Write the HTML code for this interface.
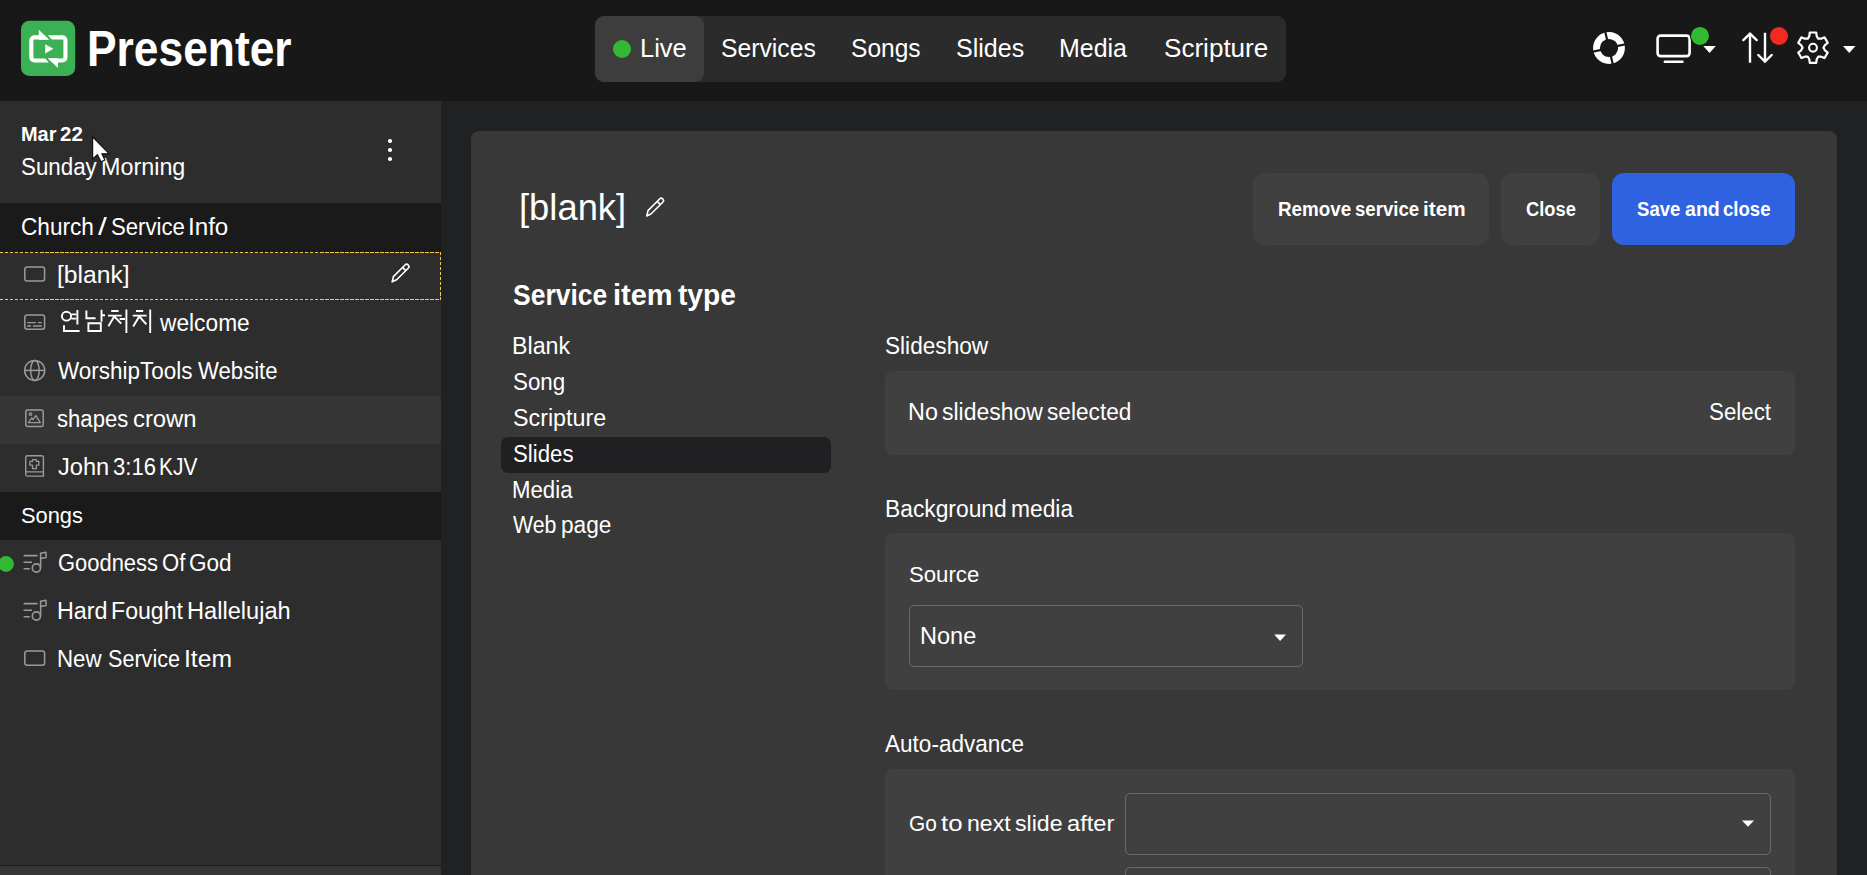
<!DOCTYPE html>
<html><head><meta charset="utf-8"><style>
html,body{margin:0;padding:0}
body{width:1867px;height:875px;overflow:hidden;position:relative;background:#202123;font-family:"Liberation Sans",sans-serif}
.b{position:absolute}
.t{position:absolute;white-space:pre;transform-origin:0 0}
</style></head><body>
<div class="b" style="left:0px;top:0px;width:1867px;height:101px;background:#181818;border-radius:0px;"></div>
<div class="b" style="left:0px;top:101px;width:441px;height:774px;background:#2d2d2d;border-radius:0px;"></div>
<div class="b" style="left:0px;top:203px;width:441px;height:49px;background:#1a1a1a;border-radius:0px;"></div>
<div class="b" style="left:0px;top:396px;width:441px;height:48px;background:#353535;border-radius:0px;"></div>
<div class="b" style="left:0px;top:492px;width:441px;height:48px;background:#1a1a1a;border-radius:0px;"></div>
<div class="b" style="left:0px;top:865px;width:441px;height:1px;background:#1e1e1e;border-radius:0px;"></div>
<div class="b" style="left:0px;top:866px;width:441px;height:9px;background:#363636;border-radius:0px;"></div>
<div class="b" style="left:471px;top:131px;width:1366px;height:800px;background:#383838;border-radius:8px;"></div>
<svg class="b" style="left:10px;top:10px" width="80" height="80" viewBox="0 0 80 80">
<rect x="11" y="10.8" width="54.2" height="55.2" rx="8.5" fill="#3cb054"/>
<rect x="21.35" y="27.35" width="34.1" height="23.2" rx="3" fill="none" stroke="#fff" stroke-width="4.1"/>
<path d="M33.69 24.4 L37.25 24.4 L42.27 30.3 L39.67 30.3 Z" fill="#3cb054"/>
<path d="M43.11 53.4 L39.55 53.4 L34.53 47.5 L37.13 47.5 Z" fill="#3cb054"/>
<path d="M28.8 19.8 L38.98 29.63 L28.8 29.63 Z" fill="#fff"/>
<path d="M48.0 58.0 L37.82 48.17 L48.0 48.17 Z" fill="#fff"/>
<path d="M35.2 34.3 L35.2 43.4 L43.4 38.85 Z" fill="#fff"/>
</svg>
<div class="t" style="left:87.01px;top:23.65px;font-size:50.62px;line-height:50.62px;font-weight:700;color:#fff;transform:scaleX(0.8761);">Presenter</div>
<div class="b" style="left:595px;top:16px;width:691px;height:66px;background:#2b2b2b;border-radius:9px;"></div>
<div class="b" style="left:595px;top:16px;width:109px;height:66px;background:#3d3d3d;border-radius:9px;"></div>
<div class="b" style="left:613px;top:40px;width:18px;height:18px;border-radius:50%;background:#33b833"></div>
<div class="t" style="left:639.90px;top:35.07px;font-size:26.62px;line-height:26.62px;font-weight:400;color:#fff;transform:scaleX(0.9571);">Live</div>
<div class="t" style="left:721.49px;top:35.07px;font-size:26.62px;line-height:26.62px;font-weight:400;color:#fff;transform:scaleX(0.9285);">Services</div>
<div class="t" style="left:851.29px;top:35.07px;font-size:26.62px;line-height:26.62px;font-weight:400;color:#fff;transform:scaleX(0.9232);">Songs</div>
<div class="t" style="left:956.17px;top:35.07px;font-size:26.62px;line-height:26.62px;font-weight:400;color:#fff;transform:scaleX(0.9412);">Slides</div>
<div class="t" style="left:1059.34px;top:35.07px;font-size:26.62px;line-height:26.62px;font-weight:400;color:#fff;transform:scaleX(0.9383);">Media</div>
<div class="t" style="left:1164.03px;top:35.07px;font-size:26.62px;line-height:26.62px;font-weight:400;color:#fff;transform:scaleX(0.9794);">Scripture</div>
<svg class="b" style="left:1560px;top:0px" width="307" height="101" viewBox="1560 0 307 101">
<circle cx="1609" cy="48" r="12.5" fill="none" stroke="#fff" stroke-width="6.8"/>
<line x1="1607.43" y1="41.18" x2="1604.95" y2="30.46" stroke="#181818" stroke-width="2.2"/><line x1="1615.82" y1="46.43" x2="1626.54" y2="43.95" stroke="#181818" stroke-width="2.2"/><line x1="1610.57" y1="54.82" x2="1613.05" y2="65.54" stroke="#181818" stroke-width="2.2"/><line x1="1602.18" y1="49.57" x2="1591.46" y2="52.05" stroke="#181818" stroke-width="2.2"/>
<rect x="1657.6" y="35.6" width="32" height="20.5" rx="3" fill="none" stroke="#fff" stroke-width="2.6"/>
<rect x="1663.6" y="60.6" width="20" height="2.5" rx="1" fill="#fff"/>
<circle cx="1700" cy="35.9" r="10" fill="#181818"/>
<circle cx="1700" cy="35.9" r="9" fill="#33b833"/>
<path d="M1703.3 46.1 L1715.8 46.1 L1709.55 53 Z" fill="#fff"/>
<path d="M1750 62.7 V34.5" fill="none" stroke="#fff" stroke-width="2.4"/><path d="M1743.3 40.1 L1750 33.6 L1756.7 40.1" fill="none" stroke="#fff" stroke-width="2.4" stroke-linecap="round" stroke-linejoin="miter"/>
<path d="M1765 32.8 V61" fill="none" stroke="#fff" stroke-width="2.4"/><path d="M1758.3 55 L1765 61.5 L1771.7 55" fill="none" stroke="#fff" stroke-width="2.4" stroke-linecap="round" stroke-linejoin="miter"/>
<circle cx="1779" cy="36" r="9" fill="#f22b22"/>
<path d="M1809.30 36.10 L1809.80 32.50 L1816.20 32.50 L1816.70 36.10 L1818.20 38.69 L1821.20 38.70 L1824.56 37.33 L1827.76 42.87 L1824.90 45.10 L1823.40 47.70 L1824.90 50.30 L1827.76 52.53 L1824.56 58.07 L1821.20 56.70 L1818.20 56.71 L1816.70 59.30 L1816.20 62.90 L1809.80 62.90 L1809.30 59.30 L1807.80 56.71 L1804.80 56.70 L1801.44 58.07 L1798.24 52.53 L1801.10 50.30 L1802.60 47.70 L1801.10 45.10 L1798.24 42.87 L1801.44 37.33 L1804.80 38.70 L1807.80 38.69 Z" fill="none" stroke="#fff" stroke-width="2.2" stroke-linejoin="round"/>
<circle cx="1813" cy="47.7" r="3.9" fill="none" stroke="#fff" stroke-width="2.1"/>
<path d="M1843 46 L1855.5 46 L1849.25 53 Z" fill="#fff"/>
</svg>
<div class="t" style="left:20.65px;top:124.29px;font-size:20.22px;line-height:20.22px;font-weight:700;color:#fff;transform:scaleX(0.9878);">Mar</div>
<div class="t" style="left:60.28px;top:124.29px;font-size:20.22px;line-height:20.22px;font-weight:700;color:#fff;transform:scaleX(1.0154);">22</div>
<div class="t" style="left:20.74px;top:154.51px;font-size:23.85px;line-height:23.85px;font-weight:400;color:#fff;transform:scaleX(0.9368);">Sunday</div>
<div class="t" style="left:101.27px;top:154.51px;font-size:23.85px;line-height:23.85px;font-weight:400;color:#fff;transform:scaleX(0.9793);">Morning</div>
<div class="b" style="left:388px;top:139.2px;width:3.6px;height:3.6px;border-radius:50%;background:#fff"></div>
<div class="b" style="left:388px;top:148.2px;width:3.6px;height:3.6px;border-radius:50%;background:#fff"></div>
<div class="b" style="left:388px;top:157.2px;width:3.6px;height:3.6px;border-radius:50%;background:#fff"></div>
<svg class="b" style="left:88px;top:132.8px" width="30" height="34" viewBox="0 0 30 34">
<path d="M4.6 3.8 L4.6 26 L9.4 21.8 L13 28.8 L16.9 27 L13.9 20.8 L21 20.6 Z" fill="#fff" stroke="#111" stroke-width="1.2" stroke-linejoin="miter"/>
</svg>
<div class="t" style="left:20.67px;top:215.16px;font-size:24.15px;line-height:24.15px;font-weight:400;color:#fff;transform:scaleX(0.9375);">Church</div>
<div class="t" style="left:97.50px;top:215.16px;font-size:24.15px;line-height:24.15px;font-weight:400;color:#fff;transform:scaleX(1.3134);">/</div>
<div class="t" style="left:110.60px;top:215.16px;font-size:24.15px;line-height:24.15px;font-weight:400;color:#fff;transform:scaleX(0.9177);">Service</div>
<div class="t" style="left:188.36px;top:215.16px;font-size:24.15px;line-height:24.15px;font-weight:400;color:#fff;transform:scaleX(1.0010);">Info</div>
<div class="b" style="left:0;top:252px;width:441px;height:1px;background:repeating-linear-gradient(90deg,#f5c84c 0 3.5px,transparent 3.5px 5px)"></div>
<div class="b" style="left:0;top:299px;width:441px;height:1px;background:repeating-linear-gradient(90deg,#f5c84c 0 3.5px,transparent 3.5px 5px)"></div>
<div class="b" style="left:440px;top:252px;width:1px;height:48px;background:repeating-linear-gradient(180deg,#f5c84c 0 3.5px,transparent 3.5px 5px)"></div>
<svg class="b" style="left:0;top:0" width="441" height="875" viewBox="0 0 441 875">
<g fill="none" stroke="#9a9a9a" stroke-width="1.5">
<rect x="24.8" y="267" width="19.8" height="13.9" rx="2.5"/>
<rect x="24.8" y="315" width="19.8" height="14.2" rx="2.5"/>
<path d="M27.1 322.6 H35.8 M37.8 322.6 H41.9 M27.1 326 H31 M33 326 H41.9" stroke-width="1.4"/>
<circle cx="34.7" cy="370.4" r="10"/>
<ellipse cx="34.9" cy="370.4" rx="4.3" ry="10"/>
<path d="M24.7 370.4 H44.7"/>
<rect x="25.8" y="409.9" width="17.4" height="16.6" rx="2"/>
<circle cx="30.5" cy="414.1" r="1.3" stroke-width="1.2"/>
<path d="M28.4 422.6 L31.6 418 L32.9 419.6 L35.8 415.6 L40.3 422.6 Z" stroke-width="1.3" stroke-linejoin="round"/>
<path d="M25.7 474.4 V457.4 Q25.7 455.7 27.4 455.7 H41.7 Q43.4 455.7 43.4 457.4 V476.1 H27.4 Q25.7 476.1 25.7 474.4 M25.7 471.9 H43.4" stroke-width="1.4"/>
<path d="M32.55 459.55 H36.35 V461.45 H38.85 V465.15 H36.35 V468.65 H32.55 V465.15 H29.85 V461.45 H32.55 Z" stroke-width="1.3" stroke-linejoin="round"/>
<path d="M23.6 555.6 H37.6 M23.6 562.2 H32 M23.6 568.8 H29.8" stroke-width="1.6"/>
<path d="M40.6 568 V553.3 L46 552.3 V557.6 L40.6 558.6" stroke-width="1.5" stroke-linejoin="round"/>
<circle cx="36.4" cy="568" r="4.1" stroke-width="1.6"/>
<path d="M23.6 603.6 H37.6 M23.6 610.2 H32 M23.6 616.8 H29.8" stroke-width="1.6"/>
<path d="M40.6 616 V601.3 L46 600.3 V605.6 L40.6 606.6" stroke-width="1.5" stroke-linejoin="round"/>
<circle cx="36.4" cy="616" r="4.1" stroke-width="1.6"/>
<rect x="24.8" y="651" width="19.8" height="14.2" rx="2.5"/>
</g>
<path d="M392.2 281.8 L393.4 276.6 L405 265 Q406.6 263.4 408.2 265 Q409.8 266.6 408.2 268.2 L396.6 279.8 Z M402.6 267.4 L405.8 270.6" fill="none" stroke="#fff" stroke-width="1.6" stroke-linejoin="round"/>
<circle cx="6" cy="564" r="7.9" fill="#33b833"/>
</svg>
<div class="t" style="left:57.38px;top:263.78px;font-size:23.30px;line-height:23.30px;font-weight:400;color:#fff;transform:scaleX(1.0573);">[blank]</div>
<svg class="b" style="left:58px;top:306px" width="100" height="32" viewBox="58 306 100 32">
<g fill="none" stroke="#fff" stroke-width="1.9">
<ellipse cx="66.5" cy="316.2" rx="4.6" ry="4.4"/>
<path d="M71.3 314.4 H76.2 M71.3 318.6 H76.2 M77.4 310 V324.6 M64 325.2 V331 H79.6"/>
<path d="M86.4 310.6 V318.2 H95.6 M101.5 309.8 V321.8 M101.5 315.2 H105 M88.4 323.2 H100.8 V331 H88.4 Z"/>
<path d="M111.2 311 H118.6 M108 315.6 H121.6 M114.8 315.6 L108.4 326.2 M114.8 317 L121.2 323.6 M119.6 319 H125 M126.4 309.6 V333"/>
<path d="M136 311 H143.2 M132.8 315.6 H146.6 M139.8 315.6 L133.2 326.6 M139.8 317 L146.4 324.4 M150.2 309.6 V333"/>
</g></svg>
<div class="t" style="left:159.76px;top:311.78px;font-size:23.30px;line-height:23.30px;font-weight:400;color:#fff;transform:scaleX(0.9760);">welcome</div>
<div class="t" style="left:58.29px;top:359.78px;font-size:23.30px;line-height:23.30px;font-weight:400;color:#fff;transform:scaleX(0.9645);">WorshipTools</div>
<div class="t" style="left:197.69px;top:359.78px;font-size:23.30px;line-height:23.30px;font-weight:400;color:#fff;transform:scaleX(0.9504);">Website</div>
<div class="t" style="left:57.49px;top:407.78px;font-size:23.30px;line-height:23.30px;font-weight:400;color:#fff;transform:scaleX(0.9486);">shapes</div>
<div class="t" style="left:132.79px;top:407.78px;font-size:23.30px;line-height:23.30px;font-weight:400;color:#fff;transform:scaleX(1.0217);">crown</div>
<div class="t" style="left:58.05px;top:455.78px;font-size:23.30px;line-height:23.30px;font-weight:400;color:#fff;transform:scaleX(1.0144);">John</div>
<div class="t" style="left:112.77px;top:455.78px;font-size:23.30px;line-height:23.30px;font-weight:400;color:#fff;transform:scaleX(0.9481);">3:16</div>
<div class="t" style="left:159.47px;top:455.78px;font-size:23.30px;line-height:23.30px;font-weight:400;color:#fff;transform:scaleX(0.8989);">KJV</div>
<div class="t" style="left:20.72px;top:504.74px;font-size:22.40px;line-height:22.40px;font-weight:400;color:#fff;transform:scaleX(0.9755);">Songs</div>
<div class="t" style="left:57.80px;top:551.78px;font-size:23.30px;line-height:23.30px;font-weight:400;color:#fff;transform:scaleX(0.9414);">Goodness</div>
<div class="t" style="left:161.85px;top:551.78px;font-size:23.30px;line-height:23.30px;font-weight:400;color:#fff;transform:scaleX(0.9476);">Of</div>
<div class="t" style="left:189.27px;top:551.78px;font-size:23.30px;line-height:23.30px;font-weight:400;color:#fff;transform:scaleX(0.9682);">God</div>
<div class="t" style="left:57.27px;top:599.78px;font-size:23.30px;line-height:23.30px;font-weight:400;color:#fff;transform:scaleX(1.0016);">Hard</div>
<div class="t" style="left:111.19px;top:599.78px;font-size:23.30px;line-height:23.30px;font-weight:400;color:#fff;transform:scaleX(0.9926);">Fought</div>
<div class="t" style="left:186.95px;top:599.78px;font-size:23.30px;line-height:23.30px;font-weight:400;color:#fff;transform:scaleX(1.0141);">Hallelujah</div>
<div class="t" style="left:57.36px;top:647.78px;font-size:23.30px;line-height:23.30px;font-weight:400;color:#fff;transform:scaleX(0.9567);">New</div>
<div class="t" style="left:108.13px;top:647.78px;font-size:23.30px;line-height:23.30px;font-weight:400;color:#fff;transform:scaleX(0.9271);">Service</div>
<div class="t" style="left:184.12px;top:647.78px;font-size:23.30px;line-height:23.30px;font-weight:400;color:#fff;transform:scaleX(1.0589);">Item</div>
<div class="t" style="left:518.85px;top:190.20px;font-size:36.50px;line-height:36.50px;font-weight:400;color:#fff;transform:scaleX(0.9963);">[blank]</div>
<svg class="b" style="left:640px;top:192px" width="30" height="30" viewBox="640 192 30 30">
<path d="M646.8 216 L648 210.6 L659.6 199 Q661.2 197.4 662.8 199 Q664.4 200.6 662.8 202.2 L651.2 213.8 Z M657.2 201.4 L660.4 204.6" fill="none" stroke="#fff" stroke-width="1.6" stroke-linejoin="round"/>
</svg>
<div class="b" style="left:1253px;top:173px;width:236px;height:72px;background:#404040;border-radius:12px;"></div>
<div class="b" style="left:1501px;top:173px;width:99px;height:72px;background:#404040;border-radius:12px;"></div>
<div class="b" style="left:1612px;top:173px;width:183px;height:72px;background:#2f62e0;border-radius:12px;"></div>
<div class="t" style="left:1278.33px;top:199.02px;font-size:20.65px;line-height:20.65px;font-weight:700;color:#fff;transform:scaleX(0.9121);">Remove</div>
<div class="t" style="left:1355.35px;top:199.02px;font-size:20.65px;line-height:20.65px;font-weight:700;color:#fff;transform:scaleX(0.9024);">service</div>
<div class="t" style="left:1422.65px;top:199.02px;font-size:20.65px;line-height:20.65px;font-weight:700;color:#fff;transform:scaleX(1.0035);">item</div>
<div class="t" style="left:1525.87px;top:199.02px;font-size:20.65px;line-height:20.65px;font-weight:700;color:#fff;transform:scaleX(0.8879);">Close</div>
<div class="t" style="left:1637.44px;top:199.02px;font-size:20.65px;line-height:20.65px;font-weight:700;color:#fff;transform:scaleX(0.8991);">Save</div>
<div class="t" style="left:1684.81px;top:199.02px;font-size:20.65px;line-height:20.65px;font-weight:700;color:#fff;transform:scaleX(0.9496);">and</div>
<div class="t" style="left:1722.86px;top:199.02px;font-size:20.65px;line-height:20.65px;font-weight:700;color:#fff;transform:scaleX(0.9010);">close</div>
<div class="t" style="left:513.21px;top:280.74px;font-size:28.65px;line-height:28.65px;font-weight:700;color:#fff;transform:scaleX(0.9246);">Service</div>
<div class="t" style="left:612.87px;top:280.74px;font-size:28.65px;line-height:28.65px;font-weight:700;color:#fff;transform:scaleX(1.0134);">item</div>
<div class="t" style="left:678.15px;top:280.74px;font-size:28.65px;line-height:28.65px;font-weight:700;color:#fff;transform:scaleX(0.9827);">type</div>
<div class="b" style="left:501px;top:437px;width:330px;height:36px;background:#202022;border-radius:7px;"></div>
<div class="t" style="left:512.28px;top:334.80px;font-size:23.27px;line-height:23.27px;font-weight:400;color:#fff;transform:scaleX(0.9979);">Blank</div>
<div class="t" style="left:513.19px;top:370.80px;font-size:23.27px;line-height:23.27px;font-weight:400;color:#fff;transform:scaleX(0.9606);">Song</div>
<div class="t" style="left:513.15px;top:406.80px;font-size:23.27px;line-height:23.27px;font-weight:400;color:#fff;transform:scaleX(1.0005);">Scripture</div>
<div class="t" style="left:513.20px;top:443.00px;font-size:23.27px;line-height:23.27px;font-weight:400;color:#fff;transform:scaleX(0.9545);">Slides</div>
<div class="t" style="left:512.37px;top:478.70px;font-size:23.27px;line-height:23.27px;font-weight:400;color:#fff;transform:scaleX(0.9545);">Media</div>
<div class="t" style="left:513.39px;top:514.30px;font-size:23.27px;line-height:23.27px;font-weight:400;color:#fff;transform:scaleX(0.9165);">Web</div>
<div class="t" style="left:560.72px;top:514.30px;font-size:23.27px;line-height:23.27px;font-weight:400;color:#fff;transform:scaleX(0.9752);">page</div>
<div class="t" style="left:884.78px;top:334.73px;font-size:23.71px;line-height:23.71px;font-weight:400;color:#fff;transform:scaleX(0.9547);">Slideshow</div>
<div class="b" style="left:885px;top:371px;width:910px;height:84px;background:#404040;border-radius:8px;"></div>
<div class="t" style="left:908.37px;top:401.23px;font-size:23.71px;line-height:23.71px;font-weight:400;color:#fff;transform:scaleX(0.9860);">No</div>
<div class="t" style="left:941.77px;top:401.23px;font-size:23.71px;line-height:23.71px;font-weight:400;color:#fff;transform:scaleX(0.9686);">slideshow</div>
<div class="t" style="left:1047.18px;top:401.23px;font-size:23.71px;line-height:23.71px;font-weight:400;color:#fff;transform:scaleX(0.9556);">selected</div>
<div class="t" style="left:1709.20px;top:401.23px;font-size:23.71px;line-height:23.71px;font-weight:400;color:#fff;transform:scaleX(0.9418);">Select</div>
<div class="t" style="left:884.52px;top:496.81px;font-size:23.85px;line-height:23.85px;font-weight:400;color:#fff;transform:scaleX(0.9563);">Background</div>
<div class="t" style="left:1011.26px;top:496.81px;font-size:23.85px;line-height:23.85px;font-weight:400;color:#fff;transform:scaleX(0.9559);">media</div>
<div class="b" style="left:885px;top:533px;width:910px;height:157px;background:#404040;border-radius:8px;"></div>
<div class="t" style="left:908.70px;top:563.09px;font-size:22.69px;line-height:22.69px;font-weight:400;color:#fff;transform:scaleX(0.9773);">Source</div>
<div class="b" style="left:909px;top:605px;width:394px;height:62px;background:transparent;border-radius:5px;border:1.3px solid #6a6a6a;box-sizing:border-box"></div>
<div class="t" style="left:920.36px;top:623.71px;font-size:23.85px;line-height:23.85px;font-weight:400;color:#fff;transform:scaleX(0.9865);">None</div>
<svg class="b" style="left:1270px;top:630px" width="20" height="14" viewBox="1270 630 20 14"><path d="M1274.2 634.6 H1286 L1280.1 640.9 Z" fill="#fff"/></svg>
<div class="t" style="left:884.94px;top:732.75px;font-size:23.56px;line-height:23.56px;font-weight:400;color:#fff;transform:scaleX(0.9575);">Auto-advance</div>
<div class="b" style="left:885px;top:769px;width:910px;height:200px;background:#404040;border-radius:8px;"></div>
<div class="t" style="left:908.96px;top:812.61px;font-size:21.96px;line-height:21.96px;font-weight:400;color:#fff;transform:scaleX(0.9491);">Go</div>
<div class="t" style="left:941.41px;top:812.61px;font-size:21.96px;line-height:21.96px;font-weight:400;color:#fff;transform:scaleX(1.1770);">to</div>
<div class="t" style="left:966.74px;top:812.61px;font-size:21.96px;line-height:21.96px;font-weight:400;color:#fff;transform:scaleX(1.0511);">next</div>
<div class="t" style="left:1014.86px;top:812.61px;font-size:21.96px;line-height:21.96px;font-weight:400;color:#fff;transform:scaleX(1.0528);">slide</div>
<div class="t" style="left:1066.89px;top:812.61px;font-size:21.96px;line-height:21.96px;font-weight:400;color:#fff;transform:scaleX(1.0782);">after</div>
<div class="b" style="left:1125px;top:793px;width:646px;height:62px;background:transparent;border-radius:5px;border:1.3px solid #6a6a6a;box-sizing:border-box"></div>
<svg class="b" style="left:1735px;top:815px" width="20" height="14" viewBox="1735 815 20 14"><path d="M1742 820.5 H1754 L1748 826.8 Z" fill="#fff"/></svg>
<div class="b" style="left:1125px;top:867px;width:646px;height:62px;background:transparent;border-radius:5px;border:1.3px solid #6a6a6a;box-sizing:border-box"></div>
</body></html>
